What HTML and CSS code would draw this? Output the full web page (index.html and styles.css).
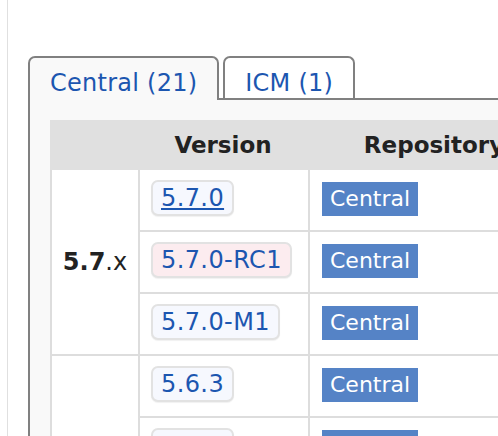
FILE: index.html
```html
<!DOCTYPE html>
<html lang="en">
<head>
<meta charset="utf-8">
<title>Versions</title>
<link rel="stylesheet" href="styles.css">
</head>
<body>
<div class="page">
  <div class="tabs">
    <a class="tab active">Central (21)</a>
    <a class="tab">ICM (1)</a>
  </div>
  <div class="panel">
    <table class="grid">
      <colgroup>
        <col class="c1">
        <col class="c2">
        <col class="c3">
      </colgroup>
      <thead>
        <tr><th></th><th>Version</th><th>Repository</th></tr>
      </thead>
      <tbody>
        <tr>
          <td class="group" rowspan="3"><b>5.7</b>.x</td>
          <td class="ver"><a class="vbtn release hover">5.7.0</a></td>
          <td class="repo"><span class="lbl">Central</span></td>
        </tr>
        <tr>
          <td class="ver"><a class="vbtn rc">5.7.0-RC1</a></td>
          <td class="repo"><span class="lbl">Central</span></td>
        </tr>
        <tr>
          <td class="ver"><a class="vbtn release">5.7.0-M1</a></td>
          <td class="repo"><span class="lbl">Central</span></td>
        </tr>
        <tr>
          <td class="group" rowspan="2"></td>
          <td class="ver"><a class="vbtn release">5.6.3</a></td>
          <td class="repo"><span class="lbl">Central</span></td>
        </tr>
        <tr>
          <td class="ver"><a class="vbtn release">5.6.2</a></td>
          <td class="repo"><span class="lbl">Central</span></td>
        </tr>
      </tbody>
    </table>
  </div>
</div>
</body>
</html>
```

FILE: styles.css
```css
html, body {
  margin: 0;
  padding: 0;
  background: #ffffff;
  overflow: hidden;
}

body {
  font-family: "DejaVu Sans", Verdana, sans-serif;
  color: #222222;
  width: 498px;
  height: 436px;
}

.page {
  margin-left: 7px;
  border-left: 1px solid #e0e0e0;
  padding: 56px 0 0 20px;
  width: 700px;
  min-height: 500px;
}

.tabs {
  display: flex;
  align-items: flex-start;
  gap: 4px;
}

.tab {
  display: block;
  font-size: 24px;
  line-height: 28px;
  letter-spacing: 0.25px;
  color: #1c56b0;
  padding: 11px 20px 1px;
  border: 2px solid #808080;
  border-bottom: none;
  border-radius: 7px 7px 0 0;
  background: #ffffff;
  white-space: nowrap;
}

.tab.active {
  background: #f9f9f9;
  padding-bottom: 3px;
  margin-bottom: -2px;
  position: relative;
  z-index: 1;
}

.panel {
  border-left: 2px solid #808080;
  border-top: 2px solid #808080;
  background: #f9f9f9;
  padding: 20px 0 0 20px;
  min-height: 400px;
}

.grid {
  border-collapse: separate;
  border-spacing: 0;
  table-layout: fixed;
  width: 510px;
  background: #ffffff;
}

.c1 { width: 88px; }
.c2 { width: 170px; }
.c3 { width: 252px; }

.grid th {
  height: 50px;
  padding: 0;
  background: #e0e0e0;
  font-size: 23px;
  font-weight: bold;
  color: #222222;
  text-align: center;
  vertical-align: middle;
  white-space: nowrap;
}

.grid td {
  border-left: 2px solid #dddddd;
  border-bottom: 2px solid #dddddd;
  vertical-align: top;
  padding: 10px 11px 14px;
  line-height: 0;
}

.grid td.group {
  vertical-align: middle;
  text-align: center;
  padding: 0;
  font-size: 24px;
  line-height: 28px;
  color: #222222;
}

.grid td.repo {
  padding-left: 12px;
}

.vbtn {
  display: block;
  width: fit-content;
  box-sizing: border-box;
  height: 36px;
  padding: 0 8px;
  font-size: 24px;
  line-height: 32px;
  letter-spacing: 0.4px;
  color: #1c56b0;
  border: 2px solid #e2e2e2;
  border-radius: 7px;
  box-shadow: 0 1px 1px rgba(0, 0, 0, 0.06);
  white-space: nowrap;
}

.vbtn.release { background: #f6f8fe; }
.vbtn.rc { background: #fcecef; }
.vbtn.hover { text-decoration: underline; }

.lbl {
  display: block;
  width: fit-content;
  margin-top: 2px;
  height: 34px;
  padding: 0 8px;
  font-size: 22px;
  line-height: 34px;
  color: #ffffff;
  background: #5583c6;
  white-space: nowrap;
}
```
